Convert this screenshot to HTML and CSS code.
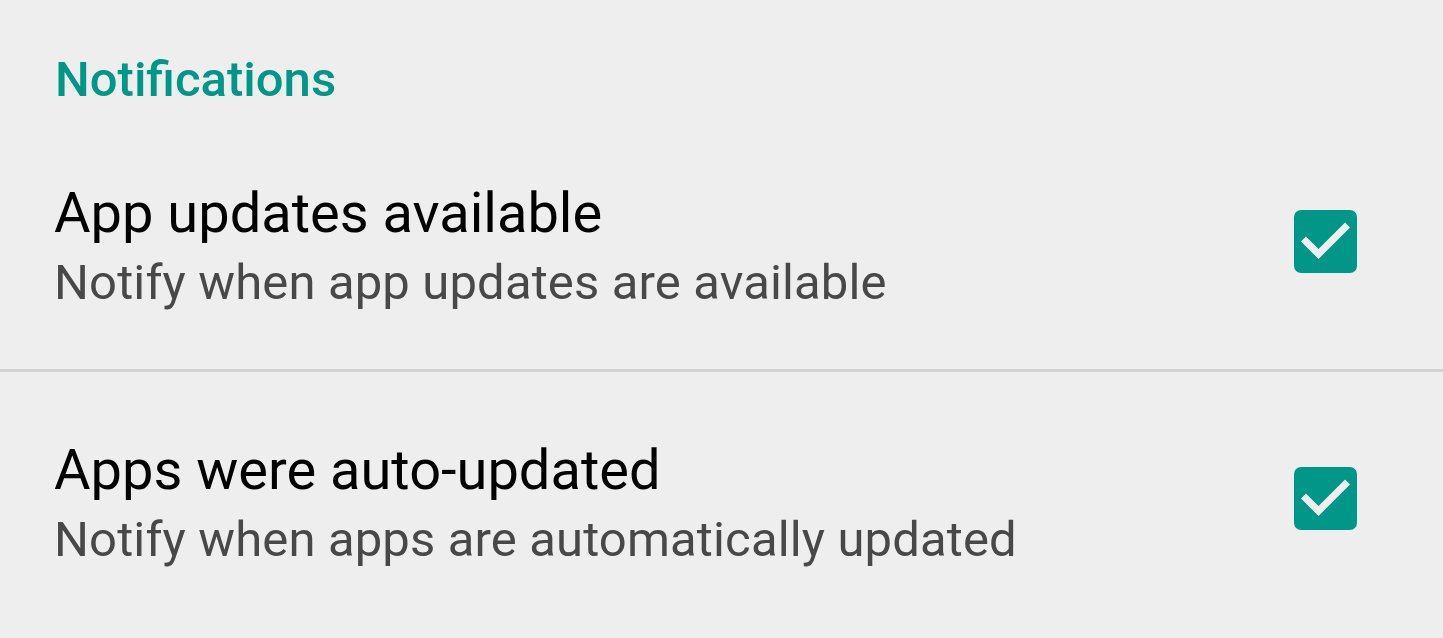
FILE: index.html
```html
<!DOCTYPE html>
<html lang="en">

<head>
    <meta charset="UTF-8">
    <title>Notifications</title>
    <link rel="stylesheet" href="styles.css">
</head>

<body>
    <div class="settings">
        <h2 class="category">Notifications</h2>

        <div class="pref pref-first">
            <div class="pref-text">
                <div class="pref-title">App updates available</div>
                <div class="pref-summary">Notify when app updates are available</div>
            </div>
            <svg class="checkbox" viewBox="3 3 18 18" width="63" height="63">
                <rect x="3" y="3" width="18" height="18" rx="2" fill="#009688"/>
                <path d="M10 17l-5-5 1.41-1.41L10 14.17l7.59-7.59L19 8z" fill="#eeeeee"/>
            </svg>
        </div>

        <div class="pref pref-last">
            <div class="pref-text">
                <div class="pref-title">Apps were auto-updated</div>
                <div class="pref-summary">Notify when apps are automatically updated</div>
            </div>
            <svg class="checkbox" viewBox="3 3 18 18" width="63" height="63">
                <rect x="3" y="3" width="18" height="18" rx="2" fill="#009688"/>
                <path d="M10 17l-5-5 1.41-1.41L10 14.17l7.59-7.59L19 8z" fill="#eeeeee"/>
            </svg>
        </div>
    </div>
</body>

</html>
```

FILE: styles.css
```css
* {
    padding: 0;
    margin: 0;
}

body {
    background-color: #eeeeee;
    font-family: Roboto, "Noto Sans", sans-serif;
    height: 638px;
    overflow: hidden;
}

.settings {
    padding-top: 51px;
}

.category {
    padding-left: 55px;
    font-size: 49px;
    line-height: 58px;
    font-weight: 500;
    color: #009688;
}

.pref {
    display: flex;
    align-items: flex-start;
    padding-left: 54px;
    padding-right: 86px;
}

.pref-first {
    padding-top: 71px;
    padding-bottom: 49px;
    border-bottom: 3px solid #d2d2d2;
}

.pref-last {
    padding-top: 65px;
}

.pref-text {
    flex: 1;
}

.pref-title {
    font-size: 56px;
    line-height: 66px;
    color: #000;
}

.pref-summary {
    font-size: 49px;
    line-height: 74px;
    letter-spacing: 0.14px;
    color: #484848;
}

.checkbox {
    display: block;
    margin-top: 30px;
    flex-shrink: 0;
}
```
